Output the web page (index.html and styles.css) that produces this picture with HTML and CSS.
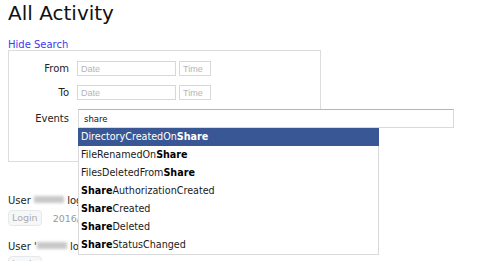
FILE: index.html
```html
<!DOCTYPE html>
<html lang="en">
<head>
<meta charset="UTF-8">
<title>All Activity</title>
<link rel="stylesheet" href="styles.css">
</head>
<body>

<h1 class="page-title">All Activity</h1>
<a class="toggle-search" href="#">Hide Search</a>

<div class="search-box">
  <div class="search-grid">
    <label class="field-label">From</label>
    <div class="field-pair">
      <input class="date-input" type="text" placeholder="Date">
      <input class="time-input" type="text" placeholder="Time">
    </div>
    <label class="field-label">To</label>
    <div class="field-pair">
      <input class="date-input" type="text" placeholder="Date">
      <input class="time-input" type="text" placeholder="Time">
    </div>
    <label class="field-label events-label">Events</label>
    <div class="events-field">
      <input class="events-input" type="text" value="share">
      <!-- autocomplete menu -->
      <ul class="suggestions">
        <li class="selected">DirectoryCreatedOn<b>Share</b></li>
        <li>FileRenamedOn<b>Share</b></li>
        <li>FilesDeletedFrom<b>Share</b></li>
        <li><b>Share</b>AuthorizationCreated</li>
        <li><b>Share</b>Created</li>
        <li><b>Share</b>Deleted</li>
        <li><b>Share</b>StatusChanged</li>
      </ul>
    </div>
  </div>
</div>

<div class="activity">
  <div class="entry">
    <div class="entry-title">User <span class="blurred"></span> log</div>
    <div class="entry-meta"><span class="badge">Login</span><span class="stamp">2016/0</span></div>
  </div>
  <div class="entry">
    <div class="entry-title">User '<span class="blurred"></span> log</div>
    <div class="entry-meta"><span class="badge">Login</span><span class="stamp">2016/08/08 12:35:11 PM</span></div>
  </div>
</div>

</body>
</html>
```

FILE: styles.css
```css
body {
  font-family: "DejaVu Sans", Verdana, sans-serif;
  font-size: 10px;
  color: #222;
  background-color: #fff;
  margin: 0;
  padding: 1px 8px 0;
  overflow: hidden;
}
.page-title {
  font-size: 20px;
  font-weight: normal;
  line-height: 24px;
  color: #111;
  margin: 0 0 14px;
}
.toggle-search {
  display: block;
  line-height: 12px;
  color: #3b3bf0;
  text-decoration: none;
}
.search-box {
  width: 311px;
  margin-top: -1px;
  border: 1px solid #dcdcdc;
  padding: 10px 0 33px;
}
.search-grid {
  display: grid;
  grid-template-columns: 60px auto;
  column-gap: 8px;
  row-gap: 9px;
  align-items: center;
}
.field-label {
  text-align: right;
  color: #222;
}
.field-pair {
  display: flex;
  gap: 3px;
}
.date-input,
.time-input {
  box-sizing: border-box;
  height: 15px;
  margin: 0;
  padding: 0 3px;
  border: 1px solid #d8d8d8;
  font-family: "Liberation Sans", Arial, sans-serif;
  font-size: 9px;
}
.date-input {
  width: 99px;
}
.time-input {
  width: 32px;
}
.date-input::placeholder,
.time-input::placeholder {
  color: #b5b5b5;
}
.events-field {
  position: relative;
  margin-left: 1px;
}
.events-input {
  box-sizing: border-box;
  display: block;
  width: 376px;
  height: 19px;
  margin: 0;
  padding: 0 5px;
  border: 1px solid #dadada;
  border-top-color: #b5b5b5;
  font-family: "DejaVu Sans", Verdana, sans-serif;
  font-size: 8.5px;
  color: #111;
}
.suggestions {
  position: absolute;
  left: 0;
  top: 19px;
  width: 299px;
  margin: 0;
  padding: 0;
  list-style: none;
  background-color: #fff;
  border: 1px solid #dadada;
  border-top: none;
  font-size: 9.6px;
  color: #1a1a1a;
}
.suggestions li {
  height: 18px;
  line-height: 18px;
  padding-left: 2px;
}
.suggestions b {
  color: #000;
}
.suggestions .selected {
  background-color: #3a5795;
  color: #fff;
  margin: 0 -1px;
  padding-left: 3px;
}
.suggestions .selected b {
  color: #fff;
}
.activity {
  margin-top: 33px;
}
.entry {
  margin-bottom: 15px;
}
.entry-title {
  line-height: 12px;
  color: #222;
  white-space: nowrap;
}
.blurred {
  display: inline-block;
  width: 30px;
  height: 7px;
  vertical-align: 1px;
  background-color: #c8c8c8;
  filter: blur(1.5px);
}
.entry-meta {
  display: flex;
  align-items: center;
  gap: 11px;
  margin-top: 3px;
  white-space: nowrap;
}
.badge {
  display: inline-block;
  height: 14px;
  line-height: 14px;
  padding: 0 3px;
  border: 1px solid #e6e8ea;
  border-radius: 4px;
  background-color: #f6f7f9;
  color: #aaa;
  font-size: 9.5px;
}
.stamp {
  color: #999;
  font-size: 9.5px;
}
```
